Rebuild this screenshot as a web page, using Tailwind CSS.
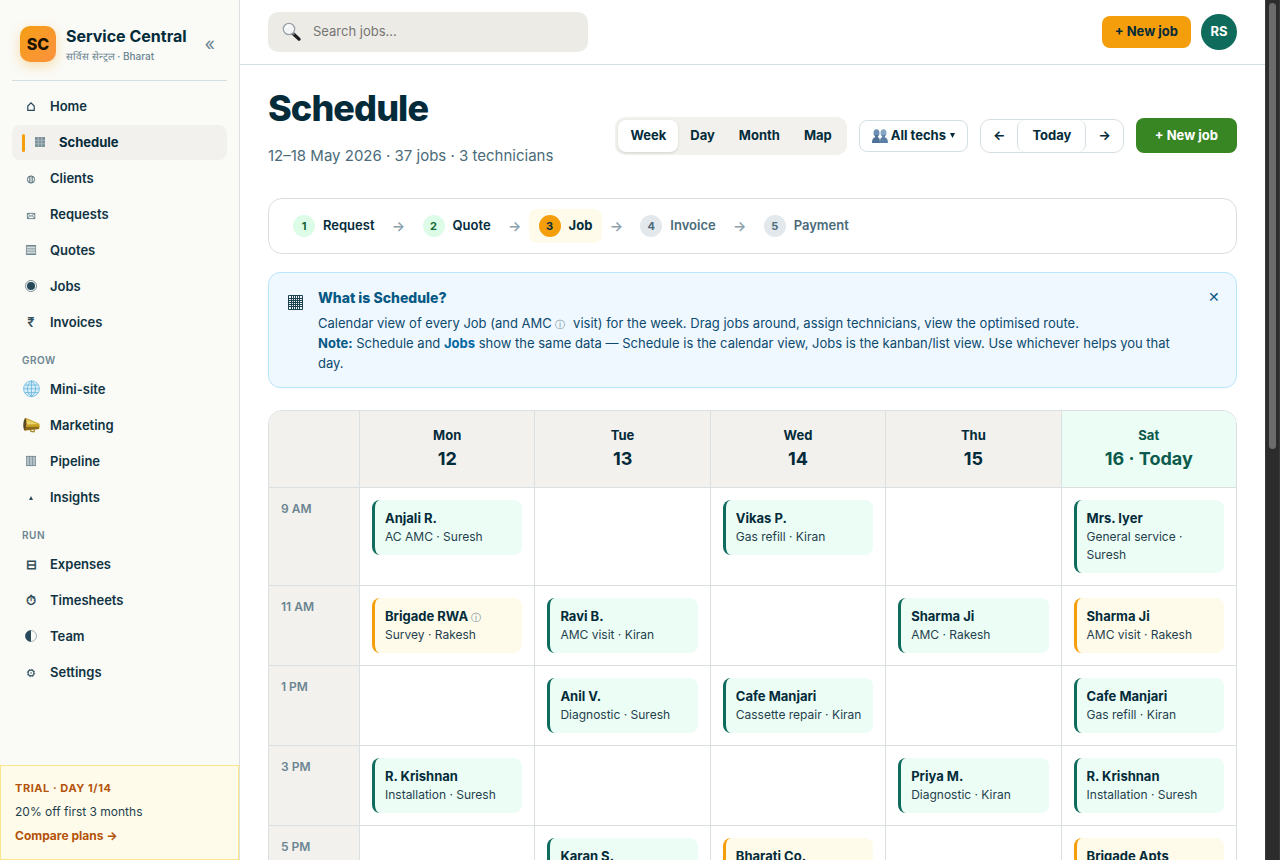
<!DOCTYPE html>
<html lang="en">
<head>
  <meta charset="UTF-8" />
  <meta name="viewport" content="width=device-width, initial-scale=1" />
  <title>Schedule · Service Central</title>
  <script src="https://cdn.jsdelivr.net/npm/@tailwindcss/browser@4"></script>
</head>
<body class="flex h-screen overflow-hidden bg-white font-['Inter',sans-serif] text-[#032b3a]">

  <!-- Sidebar -->
  <aside class="flex w-60 shrink-0 flex-col border-r border-[#dadfe2] bg-[#fafaf6]">
    <div class="flex-1 overflow-hidden px-3 pt-3">
      <div class="mb-2 flex h-[69px] items-center gap-[10px] border-b border-[#d5dee3] px-2 pb-1">
        <div class="flex size-9 shrink-0 items-center justify-center rounded-[10px] bg-linear-to-br from-[#f59e0b] to-[#fb923c] text-base font-extrabold text-[#1c1300] shadow-[0_4px_12px_rgba(245,158,11,0.3)]">SC</div>
        <div class="min-w-0 flex-1 pt-1">
          <div class="text-base leading-5 font-bold whitespace-nowrap">Service Central</div>
          <div class="text-[10px] leading-5 font-medium whitespace-nowrap text-[#6b8592]">सर्विस सेन्ट्रल · Bharat</div>
        </div>
        <button class="px-1 text-lg leading-5 text-[#6b8592]" aria-label="Collapse sidebar">«</button>
      </div>

      <nav class="flex flex-col gap-px text-[13px] font-semibold text-[#0f3342]">
        <a href="#" class="flex h-[35px] items-center gap-[10px] rounded-lg px-[10px]">
          <svg class="h-[17px] w-[18px]" viewBox="0 0 18 17" fill="none" stroke="#27495a" stroke-width="1.2"><path d="M5.8 12.4V8L9 4.8 12.2 8v4.4z"/></svg>Home</a>
        <a href="#" class="flex h-[35px] items-center rounded-lg bg-[#f3f1ed] px-[10px] font-bold text-[#032b3a]">
          <span class="mr-[6px] h-[18px] w-[3px] rounded-xs bg-[#f59e0b]"></span>
          <svg class="mr-[10px] h-[17px] w-[18px]" viewBox="0 0 18 17"><path d="M4 3h10v10H4z" fill="#7d929b"/><path d="M4 6.3h10M4 9.7h10M7.3 3v10M10.7 3v10" stroke="#b0bdc1" stroke-width=".8"/></svg>Schedule</a>
        <a href="#" class="flex h-[35px] items-center gap-[10px] rounded-lg px-[10px]">
          <svg class="h-[17px] w-[18px]" viewBox="0 0 18 17" fill="none" stroke="#4f6c77"><circle cx="9" cy="9.5" r="3.6"/><path d="M7.5 6.2v6.6M9 6v7M10.5 6.2v6.6" stroke-width=".7"/></svg>Clients</a>
        <a href="#" class="flex h-[35px] items-center gap-[10px] rounded-lg px-[10px]">
          <svg class="h-[17px] w-[18px]" viewBox="0 0 18 17" fill="none" stroke="#4f6c77" stroke-width=".8"><path d="M5.4 7.4h7.4v5.2H5.4zM5.4 7.4L9 10.4l3.8-3M5.4 12.6l2.6-3M12.8 12.6l-2.7-3"/></svg>Requests</a>
        <a href="#" class="flex h-[35px] items-center gap-[10px] rounded-lg px-[10px]">
          <svg class="h-[17px] w-[18px]" viewBox="0 0 18 17"><path d="M4 3h10v10H4z" fill="#a3b2b7"/><path d="M4 3.5h10M4 12.5h10" stroke="#6f8790"/><path d="M4 5.5h10M4 8h10M4 10.5h10" stroke="#dfe5e5" stroke-width=".8"/><path d="M4.4 3v10M13.6 3v10" stroke="#7d929b" stroke-width=".8"/></svg>Quotes</a>
        <a href="#" class="flex h-[35px] items-center gap-[10px] rounded-lg px-[10px]">
          <svg class="h-[17px] w-[18px]" viewBox="0 0 18 17"><circle cx="9" cy="8" r="5.5" fill="none" stroke="#6f8790" stroke-width=".9"/><circle cx="9" cy="8" r="4" fill="#27495a"/></svg>Jobs</a>
        <a href="#" class="flex h-[35px] items-center gap-[10px] rounded-lg px-[10px]"><span class="w-[18px] text-center opacity-85">₹</span>Invoices</a>

        <div class="px-[10px] pt-[11px] pb-[3px] text-[10px] leading-4 font-semibold tracking-wider text-[#6b8592]">GROW</div>
        <a href="#" class="flex h-[35px] items-center gap-[10px] rounded-lg px-[10px]">
          <svg class="h-[17px] w-[18px] overflow-visible" viewBox="0 0 18 17"><circle cx="9.5" cy="7.8" r="7.9" fill="#d8effa" stroke="#7fc3e3"/><path d="M9.500 0v15.600M1.600 7.800h15.800M3 4h13M3 11.600h13M9.500 0c-5.500 4-5.500 11.600 0 15.600M9.500 0c5.500 4 5.500 11.600 0 15.600" fill="none" stroke="#6fb8dc" stroke-width=".9"/></svg>Mini-site</a>
        <a href="#" class="flex h-[35px] items-center gap-[10px] rounded-lg px-[10px]">
          <svg class="h-[17px] w-[18px] overflow-visible" viewBox="0 0 18 17">
            <path d="M8 11.500l1 3 3 .4.600-2.600" fill="none" stroke="#a5852b" stroke-width="1.300"/>
            <path d="M3.500.8L17 6.500c1 1.500 1 4 0 5.500L2.500 13.500z" fill="#c9a227"/>
            <path d="M4.500 2.500L16 7 5 7.500z" fill="#e9d36b"/>
            <path d="M3 10l13.500-.3L17 12 2.500 13.500z" fill="#8a6a1a"/>
            <path d="M3.300.8C1 4 .6 10 2.300 13.600 4.600 10.500 4.900 4 3.300.8z" fill="#5b4a25"/>
          </svg>Marketing</a>
        <a href="#" class="flex h-[35px] items-center gap-[10px] rounded-lg px-[10px]">
          <svg class="h-[17px] w-[18px]" viewBox="0 0 18 17"><path d="M4 3h10v10H4z" fill="#b4c0c3"/><path d="M4.500 3v10M7.500 3v10M10.500 3v10M13.500 3v10" stroke="#8499a1" stroke-width=".9"/><path d="M4 3.400h10M4 12.600h10" stroke="#6f8790" stroke-width=".8"/></svg>Pipeline</a>
        <a href="#" class="flex h-[35px] items-center gap-[10px] rounded-lg px-[10px]">
          <svg class="h-[17px] w-[18px]" viewBox="0 0 18 17"><path d="M9 7l2 4H7z" fill="#27495a"/></svg>Insights</a>

        <div class="px-[10px] pt-[11px] pb-[3px] text-[10px] leading-4 font-semibold tracking-wider text-[#6b8592]">RUN</div>
        <a href="#" class="flex h-[35px] items-center gap-[10px] rounded-lg px-[10px]"><span class="w-[18px] text-center opacity-85">⊟</span>Expenses</a>
        <a href="#" class="flex h-[35px] items-center gap-[10px] rounded-lg px-[10px]"><span class="w-[18px] text-center opacity-85">⏱</span>Timesheets</a>
        <a href="#" class="flex h-[35px] items-center gap-[10px] rounded-lg px-[10px]">
          <svg class="h-[17px] w-[18px]" viewBox="0 0 18 17"><circle cx="9" cy="8" r="5.500" fill="none" stroke="#8ba0a8" stroke-width=".8"/><path d="M9 2.200a5.800 5.800 0 0 0 0 11.600z" fill="#27495a"/></svg>Team</a>
        <a href="#" class="flex h-[35px] items-center gap-[10px] rounded-lg px-[10px]">
          <svg class="h-[17px] w-[18px]" viewBox="0 0 18 17" fill="none" stroke="#3b5a67"><circle cx="9" cy="9" r="2.900" stroke-width="1.100"/><circle cx="9" cy="9" r="3.700" stroke-width="1" stroke-dasharray="1.450 1.450"/><circle cx="9" cy="9" r=".8" fill="#3b5a67" stroke="none"/></svg>Settings</a>
      </nav>
    </div>

    <div class="border border-[#fde68a] bg-[#fffbeb] px-[14px] pt-[14px] pb-[11px]">
      <div class="text-[11px] leading-4 font-bold tracking-wider text-[#b45309]">TRIAL · DAY 1/14</div>
      <div class="mt-1 text-xs leading-6 text-[#1f3f4d]">20% off first 3 months</div>
      <a href="#" class="block text-xs leading-6 font-bold text-[#b45309]">Compare plans →</a>
    </div>
  </aside>

  <div class="flex min-w-0 flex-1 flex-col">
    <!-- Top bar -->
    <header class="flex h-[65px] shrink-0 items-center border-b border-[#d5dee3] px-7">
      <label class="flex h-10 w-80 items-center gap-3 rounded-[10px] bg-[#edebe5] px-[14px]">
        <svg class="h-5 w-[19px]" viewBox="0 0 19 20">
          <path d="M11.500 12l5.500 5.200" stroke="#1d1d1f" stroke-width="3.200" stroke-linecap="round"/>
          <path d="M10.500 10.800l2 2" stroke="#6b6b70" stroke-width="2"/>
          <circle cx="7" cy="7" r="5.700" fill="#f4f5f7" stroke="#9aa0a8" stroke-width="1.300"/>
          <path d="M3.600 6.500A3.600 3.600 0 0 1 7 3.400" fill="none" stroke="#fff" stroke-width="1.300"/>
        </svg>
        <input type="text" placeholder="Search jobs…" aria-label="Search jobs" class="min-w-0 flex-1 bg-transparent text-[13px] outline-none placeholder:text-[#757575]" />
      </label>
      <div class="ml-auto flex items-center gap-[10px]">
        <button class="h-8 rounded-lg bg-[#f59e0b] px-[13px] text-[13px] font-bold">+ New job</button>
        <div class="flex size-9 items-center justify-center rounded-full bg-[#0f6b5c] text-[13px] font-bold text-white">RS</div>
      </div>
    </header>

    <main class="min-h-0 flex-1 overflow-y-auto px-7 pt-[19px] [scrollbar-width:none]">
      <div class="flex items-center justify-between gap-4">
        <div>
          <h1 class="text-4xl leading-[48px] font-extrabold tracking-tight">Schedule</h1>
          <p class="mt-3 text-[15px] leading-6 text-[#4b6b7a]">12–18 May 2026 · 37 jobs · 3 technicians</p>
        </div>
        <div class="flex items-center gap-3 pt-[19px] text-[13px] font-bold">
          <div class="flex rounded-[10px] bg-[#f3f1ed] p-[3px]">
            <button class="h-8 rounded-lg bg-white px-3 shadow-sm">Week</button>
            <button class="h-8 rounded-lg px-3">Day</button>
            <button class="h-8 rounded-lg px-3">Month</button>
            <button class="h-8 rounded-lg px-3">Map</button>
          </div>
          <button class="flex h-8 items-center gap-[3px] rounded-lg border border-[#d5dee3] px-3">
            <svg class="h-[14px] w-4" viewBox="0 0 16 14"><g fill="#6d8fb3"><ellipse cx="4.500" cy="4" rx="3" ry="3.800"/><path d="M0 14c0-4 1.500-5.500 3.200-5.800V6h2.600v2.200C7.500 8.500 8 10 8 14z" fill="#4f7096"/></g><g fill="#86a5c4"><ellipse cx="11.500" cy="4" rx="3" ry="3.800"/><path d="M8 14c0-4 .5-5.500 2.200-5.800V6h2.600v2.200C14.500 8.500 16 10 16 14z" fill="#5d7fa5"/></g></svg>
            All techs
            <svg class="ml-px h-[5px] w-[5px]" viewBox="0 0 5 5"><path d="M0 0h5L2.500 5z" fill="#032b3a"/></svg>
          </button>
          <div class="flex rounded-[10px] border border-[#d5dee3]">
            <button class="h-8 rounded-lg px-3" aria-label="Previous week">←</button>
            <button class="h-8 rounded-lg border-x border-[#d5dee3] px-[14px]">Today</button>
            <button class="h-8 rounded-lg px-3" aria-label="Next week">→</button>
          </div>
          <button class="h-[35px] rounded-lg bg-[#388523] px-[19px] text-white">+ New job</button>
        </div>
      </div>

      <!-- Workflow steps -->
      <ol class="mt-[30px] flex h-14 items-center rounded-[14px] border border-[#dadfe2] px-[14px] text-[13px] font-semibold">
        <li class="flex h-[34px] items-center gap-2 rounded-lg px-[10px]"><span class="flex size-[22px] items-center justify-center rounded-full bg-[#dcfce7] text-[11px] font-bold text-[#166534]">1</span>Request</li>
        <li class="w-7 text-center text-sm text-[#8ba1ac]" aria-hidden="true">→</li>
        <li class="flex h-[34px] items-center gap-2 rounded-lg px-[10px]"><span class="flex size-[22px] items-center justify-center rounded-full bg-[#dcfce7] text-[11px] font-bold text-[#166534]">2</span>Quote</li>
        <li class="w-7 text-center text-sm text-[#8ba1ac]" aria-hidden="true">→</li>
        <li class="flex h-[34px] items-center gap-2 rounded-lg bg-[#fffbeb] px-[10px] font-bold"><span class="flex size-[22px] items-center justify-center rounded-full bg-[#f59e0b] text-[11px]">3</span>Job</li>
        <li class="w-7 text-center text-sm text-[#8ba1ac]" aria-hidden="true">→</li>
        <li class="flex h-[34px] items-center gap-2 rounded-lg px-[10px] text-[#4b6b7a]"><span class="flex size-[22px] items-center justify-center rounded-full bg-[#e2e8ec] text-[11px] font-bold">4</span>Invoice</li>
        <li class="w-7 text-center text-sm text-[#8ba1ac]" aria-hidden="true">→</li>
        <li class="flex h-[34px] items-center gap-2 rounded-lg px-[10px] text-[#4b6b7a]"><span class="flex size-[22px] items-center justify-center rounded-full bg-[#e2e8ec] text-[11px] font-bold">5</span>Payment</li>
      </ol>

      <!-- Explainer -->
      <section class="mt-[18px] flex items-start rounded-xl border border-[#bae6fd] bg-[#f0f8ff] py-[14px] pr-[14px] pl-[19px]">
        <svg class="mt-2 mr-[15px] size-[15px]" viewBox="0 0 15 15" fill="none" stroke="#1d4350" stroke-width="1"><path d="M.5.5h14v14H.5zM0 3.500h15M0 5.500h15M0 7.500h15M0 9.500h15M0 11.500h15M3.500 0v15M5.500 0v15M7.500 0v15M9.500 0v15M11.500 0v15"/></svg>
        <div class="flex-1 pr-8 text-[13px] leading-5 text-[#0c4a6e]">
          <h2 class="mb-1 text-sm leading-[22px] font-extrabold text-[#075985]">What is Schedule?</h2>
          <p>Calendar view of every Job (and AMC <span class="mr-1 text-[10px] leading-none text-[#6b8592]">ⓘ</span> visit) for the week. Drag jobs around, assign technicians, view the optimised route.</p>
          <p><strong class="text-[#075985]">Note:</strong> Schedule and <a href="#" class="font-bold text-[#0369a1]">Jobs</a> show the same data — Schedule is the calendar view, Jobs is the kanban/list view. Use whichever helps you that day.</p>
        </div>
        <button class="w-4 text-sm leading-5 text-[#075985]" aria-label="Dismiss">✕</button>
      </section>

      <!-- Week calendar -->
      <div class="mt-[22px] overflow-hidden rounded-[14px] border border-[#dadfe2]">
        <table class="w-full table-fixed border-separate border-spacing-0 text-left">
          <thead>
            <tr class="h-[76px] bg-[#f3f1ed] text-center text-[13px] leading-5">
              <th class="w-[90px]"></th>
              <th class="border-l border-[#dadfe2] font-bold">Mon<div class="text-lg leading-7">12</div></th>
              <th class="border-l border-[#dadfe2] font-bold">Tue<div class="text-lg leading-7">13</div></th>
              <th class="border-l border-[#dadfe2] font-bold">Wed<div class="text-lg leading-7">14</div></th>
              <th class="border-l border-[#dadfe2] font-bold">Thu<div class="text-lg leading-7">15</div></th>
              <th class="border-l border-[#dadfe2] bg-[#ecfdf5] font-bold text-[#0b5a4c]">Sat<div class="text-lg leading-7">16 · Today</div></th>
            </tr>
          </thead>
          <tbody class="align-top text-xs leading-[18px] text-[#1f3f4d]">
            <tr>
              <th class="border-t border-[#dadfe2] bg-[#f3f1ed] p-3 font-semibold text-[#6b8592]">9 AM</th>
              <td class="border-t border-l border-[#dadfe2] p-3"><div class="rounded-lg border-l-3 border-[#0f6b5c] bg-[#ecfdf5] px-[10px] pt-2 pb-[9px]"><div class="text-[13px] leading-5 font-bold text-[#032b3a]">Anjali R.</div>AC AMC · Suresh</div></td>
              <td class="border-t border-l border-[#dadfe2] p-3"></td>
              <td class="border-t border-l border-[#dadfe2] p-3"><div class="rounded-lg border-l-3 border-[#0f6b5c] bg-[#ecfdf5] px-[10px] pt-2 pb-[9px]"><div class="text-[13px] leading-5 font-bold text-[#032b3a]">Vikas P.</div>Gas refill · Kiran</div></td>
              <td class="border-t border-l border-[#dadfe2] p-3"></td>
              <td class="border-t border-l border-[#dadfe2] p-3"><div class="rounded-lg border-l-3 border-[#0f6b5c] bg-[#ecfdf5] px-[10px] pt-2 pb-[9px]"><div class="text-[13px] leading-5 font-bold text-[#032b3a]">Mrs. Iyer</div>General service · Suresh</div></td>
            </tr>
            <tr>
              <th class="border-t border-[#dadfe2] bg-[#f3f1ed] p-3 font-semibold text-[#6b8592]">11 AM</th>
              <td class="border-t border-l border-[#dadfe2] p-3"><div class="rounded-lg border-l-3 border-[#f59e0b] bg-[#fffbeb] px-[10px] pt-2 pb-[9px]"><div class="text-[13px] leading-5 font-bold text-[#032b3a]">Brigade RWA <span class="text-[10px] leading-none font-normal text-[#6b8592]">ⓘ</span></div>Survey · Rakesh</div></td>
              <td class="border-t border-l border-[#dadfe2] p-3"><div class="rounded-lg border-l-3 border-[#0f6b5c] bg-[#ecfdf5] px-[10px] pt-2 pb-[9px]"><div class="text-[13px] leading-5 font-bold text-[#032b3a]">Ravi B.</div>AMC visit · Kiran</div></td>
              <td class="border-t border-l border-[#dadfe2] p-3"></td>
              <td class="border-t border-l border-[#dadfe2] p-3"><div class="rounded-lg border-l-3 border-[#0f6b5c] bg-[#ecfdf5] px-[10px] pt-2 pb-[9px]"><div class="text-[13px] leading-5 font-bold text-[#032b3a]">Sharma Ji</div>AMC · Rakesh</div></td>
              <td class="border-t border-l border-[#dadfe2] p-3"><div class="rounded-lg border-l-3 border-[#f59e0b] bg-[#fffbeb] px-[10px] pt-2 pb-[9px]"><div class="text-[13px] leading-5 font-bold text-[#032b3a]">Sharma Ji</div>AMC visit · Rakesh</div></td>
            </tr>
            <tr>
              <th class="border-t border-[#dadfe2] bg-[#f3f1ed] p-3 font-semibold text-[#6b8592]">1 PM</th>
              <td class="border-t border-l border-[#dadfe2] p-3"></td>
              <td class="border-t border-l border-[#dadfe2] p-3"><div class="rounded-lg border-l-3 border-[#0f6b5c] bg-[#ecfdf5] px-[10px] pt-2 pb-[9px]"><div class="text-[13px] leading-5 font-bold text-[#032b3a]">Anil V.</div>Diagnostic · Suresh</div></td>
              <td class="border-t border-l border-[#dadfe2] p-3"><div class="rounded-lg border-l-3 border-[#0f6b5c] bg-[#ecfdf5] px-[10px] pt-2 pb-[9px]"><div class="text-[13px] leading-5 font-bold text-[#032b3a]">Cafe Manjari</div>Cassette repair · Kiran</div></td>
              <td class="border-t border-l border-[#dadfe2] p-3"></td>
              <td class="border-t border-l border-[#dadfe2] p-3"><div class="rounded-lg border-l-3 border-[#0f6b5c] bg-[#ecfdf5] px-[10px] pt-2 pb-[9px]"><div class="text-[13px] leading-5 font-bold text-[#032b3a]">Cafe Manjari</div>Gas refill · Kiran</div></td>
            </tr>
            <tr>
              <th class="border-t border-[#dadfe2] bg-[#f3f1ed] p-3 font-semibold text-[#6b8592]">3 PM</th>
              <td class="border-t border-l border-[#dadfe2] p-3"><div class="rounded-lg border-l-3 border-[#0f6b5c] bg-[#ecfdf5] px-[10px] pt-2 pb-[9px]"><div class="text-[13px] leading-5 font-bold text-[#032b3a]">R. Krishnan</div>Installation · Suresh</div></td>
              <td class="border-t border-l border-[#dadfe2] p-3"></td>
              <td class="border-t border-l border-[#dadfe2] p-3"></td>
              <td class="border-t border-l border-[#dadfe2] p-3"><div class="rounded-lg border-l-3 border-[#0f6b5c] bg-[#ecfdf5] px-[10px] pt-2 pb-[9px]"><div class="text-[13px] leading-5 font-bold text-[#032b3a]">Priya M.</div>Diagnostic · Kiran</div></td>
              <td class="border-t border-l border-[#dadfe2] p-3"><div class="rounded-lg border-l-3 border-[#0f6b5c] bg-[#ecfdf5] px-[10px] pt-2 pb-[9px]"><div class="text-[13px] leading-5 font-bold text-[#032b3a]">R. Krishnan</div>Installation · Suresh</div></td>
            </tr>
            <tr>
              <th class="border-t border-[#dadfe2] bg-[#f3f1ed] p-3 font-semibold text-[#6b8592]">5 PM</th>
              <td class="border-t border-l border-[#dadfe2] p-3"></td>
              <td class="border-t border-l border-[#dadfe2] p-3"><div class="rounded-lg border-l-3 border-[#0f6b5c] bg-[#ecfdf5] px-[10px] pt-2 pb-[9px]"><div class="text-[13px] leading-5 font-bold text-[#032b3a]">Karan S.</div></div></td>
              <td class="border-t border-l border-[#dadfe2] p-3"><div class="rounded-lg border-l-3 border-[#f59e0b] bg-[#fffbeb] px-[10px] pt-2 pb-[9px]"><div class="text-[13px] leading-5 font-bold text-[#032b3a]">Bharati Co.</div></div></td>
              <td class="border-t border-l border-[#dadfe2] p-3"></td>
              <td class="border-t border-l border-[#dadfe2] p-3"><div class="rounded-lg border-l-3 border-[#f59e0b] bg-[#fffbeb] px-[10px] pt-2 pb-[9px]"><div class="text-[13px] leading-5 font-bold text-[#032b3a]">Brigade Apts</div></div></td>
            </tr>
          </tbody>
        </table>
      </div>
    </main>
  </div>

  <!-- Scroll track -->
  <div class="w-[15px] shrink-0 border-x border-[#3a3a3a] bg-[#2c2c2c] px-[3px] pt-[3px]">
    <div class="h-[52%] rounded-full bg-[#6b6b6b]"></div>
  </div>
</body>
</html>
